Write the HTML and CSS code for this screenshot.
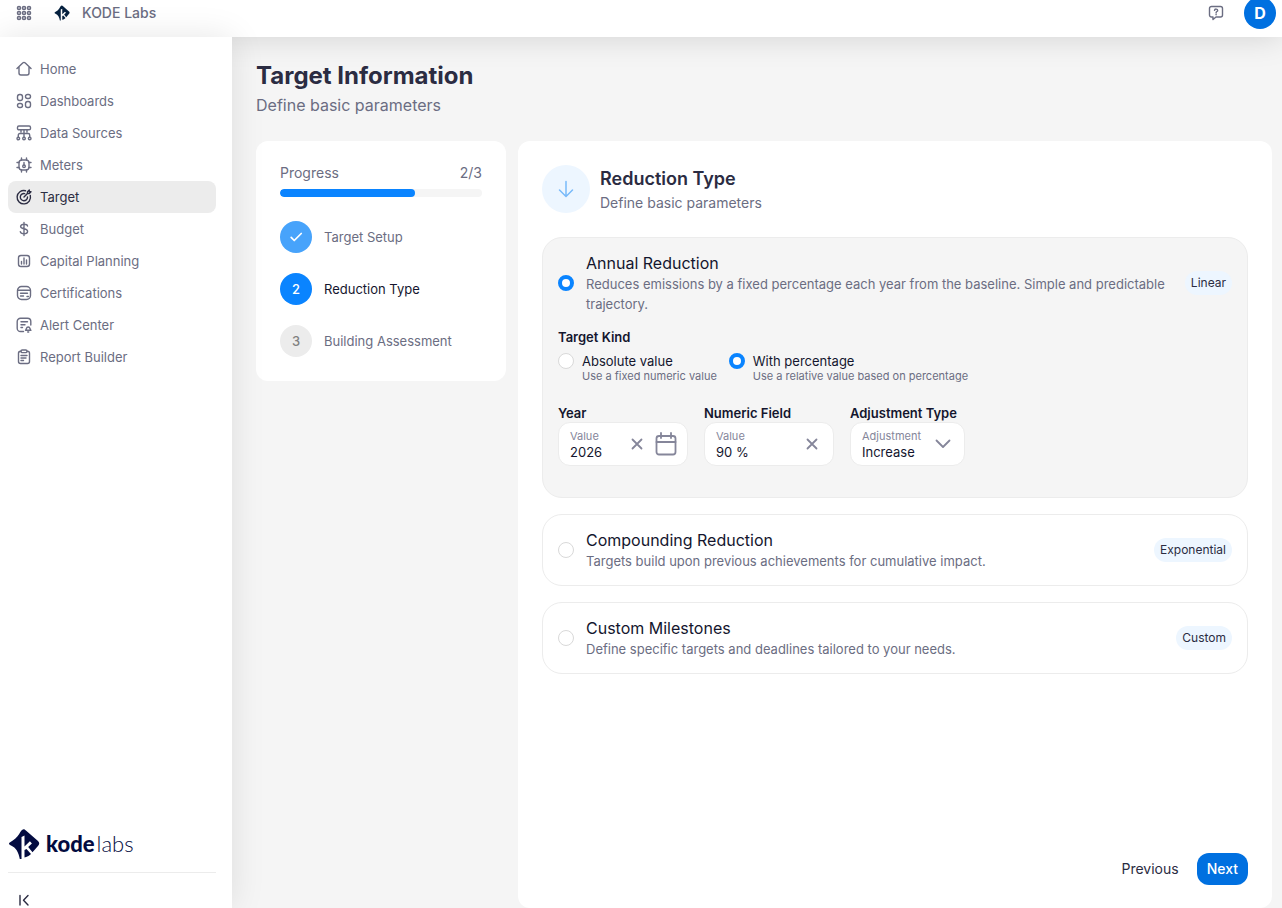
FILE: index.html
```html
<!DOCTYPE html>
<html lang="en">
<head>
<meta charset="utf-8">
<meta name="viewport" content="width=device-width, initial-scale=1">
<title>Target Information - KODE Labs</title>
<link rel="stylesheet" href="styles.css">
</head>
<body>
<div class="app">
  <header class="topbar">
    <button class="icon-btn" type="button" aria-label="Apps">
      <svg class="icon" viewBox="0 0 16 16"><g stroke-width="1.600"><circle cx="3" cy="3" r="1.500"/><circle cx="8" cy="3" r="1.500"/><circle cx="13" cy="3" r="1.500"/><circle cx="3" cy="8" r="1.500"/><circle cx="8" cy="8" r="1.500"/><circle cx="13" cy="8" r="1.500"/><circle cx="3" cy="13" r="1.500"/><circle cx="8" cy="13" r="1.500"/><circle cx="13" cy="13" r="1.500"/></g></svg>
    </button>
    <a class="org" href="#">
      <svg class="org-mark" viewBox="0 0 32 32"><use href="#mark"/></svg>
      <span>KODE Labs</span>
    </a>
    <button class="icon-btn help" type="button" aria-label="Help">
      <svg class="icon" viewBox="0 0 16 16"><path d="M3.500 1.500h9a2 2 0 0 1 2 2v6.500a2 2 0 0 1-2 2H8L5 14.500V12H3.500a2 2 0 0 1-2-2V3.500a2 2 0 0 1 2-2Z"/><path d="M6.500 5.300c.2-1.700 3.200-1.600 3.200.1 0 1.100-1.600 1.200-1.600 2.300M8.100 9.300v.4"/></svg>
    </button>
    <button class="avatar" type="button" aria-label="Account">D</button>
  </header>

  <div class="body">
    <aside class="sidebar">
      <nav class="nav">
        <a class="nav-item" href="#"><svg class="icon" viewBox="0 0 16 16"><path d="M1 7.500 6.700 2a1.900 1.900 0 0 1 2.600 0L15 7.500M3 6v6a2 2 0 0 0 2 2h6a2 2 0 0 0 2-2V6"/></svg>Home</a>
        <a class="nav-item" href="#"><svg class="icon" viewBox="0 0 16 16"><rect x="1.500" y="1.500" width="5" height="6" rx="2.200"/><rect x="9.500" y="1.500" width="5" height="4" rx="2"/><rect x="1.500" y="10.500" width="5" height="4" rx="2"/><rect x="9.500" y="8.500" width="5" height="6" rx="2.200"/></svg>Dashboards</a>
        <a class="nav-item" href="#"><svg class="icon" viewBox="0 0 16 16"><rect x="1.500" y="1" width="13" height="3.800" rx="1.400"/><path d="M8 5v7M2.300 12V10a1.500 1.500 0 0 1 1.500-1.500h8.400a1.500 1.500 0 0 1 1.500 1.500v2M5 5v2M11 5v2"/><circle cx="2.300" cy="13.500" r="1.300"/><circle cx="8" cy="13.500" r="1.300"/><circle cx="13.700" cy="13.500" r="1.300"/></svg>Data Sources</a>
        <a class="nav-item" href="#"><svg class="icon" viewBox="0 0 16 16"><rect x="3" y="3" width="10" height="10" rx="3"/><path d="M5.500 1v2M10.500 1v2M5.500 13v2M10.500 13v2M1 5.500h2M1 10.500h2M13 5.500h2M13 10.500h2M8 5.500v3"/><circle cx="8" cy="9.300" r="1.300"/></svg>Meters</a>
        <a class="nav-item active" href="#" aria-current="page"><svg class="icon" viewBox="0 0 16 16"><path d="M9.500 1.700A6.700 6.700 0 1 0 14.300 6.500M8.700 4.600A3.600 3.600 0 1 0 11.500 8M8 8l3.700-3.700M11.500 4.500V2.700L13.300 1v1.800H15l-1.700 1.700Z"/></svg>Target</a>
        <a class="nav-item" href="#"><svg class="icon" viewBox="0 0 16 16"><path d="M8 1.500v13M11.500 5C11.300 3.700 10 3.200 8 3.200S4.600 4 4.600 5.500C4.600 8.500 11.600 7 11.600 10.300c0 1.700-1.500 2.500-3.600 2.500s-3.400-.7-3.700-2.100"/></svg>Budget</a>
        <a class="nav-item" href="#"><svg class="icon" viewBox="0 0 16 16"><rect x="2.500" y="2.500" width="11" height="11" rx="2.500"/><path d="M5.500 8.500v2.500M8 5v6M10.500 7v4"/></svg>Capital Planning</a>
        <a class="nav-item" href="#"><svg class="icon" viewBox="0 0 16 16"><rect x="1.500" y="1.500" width="13" height="13" rx="4"/><path d="M2 5.300h12M4.500 8.200h7M4.500 11h3M11 11.500h1.500"/></svg>Certifications</a>
        <a class="nav-item" href="#"><svg class="icon" viewBox="0 0 16 16"><path d="M7.500 14.500H4.500a3.300 3.300 0 0 1-3.300-3.300V4.500a3.300 3.300 0 0 1 3.300-3.300h7a3.300 3.300 0 0 1 3.300 3.300V8M5 4.800h6.500M5 7.700h4M5 10.500h1.500"/><path d="M9.500 13.300c1-.8.500-3.300 2.700-3.300s1.700 2.500 2.700 3.300ZM11.700 15h1"/></svg>Alert Center</a>
        <a class="nav-item" href="#"><svg class="icon" viewBox="0 0 16 16"><path d="M5 2.300h-.5a2 2 0 0 0-2 2v8.200a2 2 0 0 0 2 2h7a2 2 0 0 0 2-2V4.300a2 2 0 0 0-2-2H11"/><rect x="5" y="1" width="6" height="2.600" rx="1.200"/><path d="M5 6.500h6M5 9h5M5 11.500h2.500"/></svg>Report Builder</a>
      </nav>
      <div class="side-foot">
        <a class="brand" href="#">
          <svg class="brand-mark" viewBox="0 0 32 32">
            <defs><g id="mark"><path fill="currentColor" d="M1 15.500c0-.7.500-1 1.500-1.600 3-1.500 6.500-4.500 8.700-8 1.400-2.500 2.600-4.700 4.400-4.700 1 0 1.700.7 2.600 1.500L30 13c1.600 1.600 1.600 3 .2 4.700l-5.700 6.600L20.200 19l3.700-3.600-2-2.100-5.400 5.300V7.500L13.500 9v22L11.800 31C10.700 24.500 8 19.500 3 17.500 1.500 17 1 16.300 1 15.500ZM16.500 22l2-1 4.500 5c-1.500 1.500-3 2.700-6.500 3.500Z"/></g></defs>
            <use href="#mark"/>
          </svg>
          <span class="brand-name"><b>kode</b><span>labs</span></span>
        </a>
        <button class="icon-btn collapse" type="button" aria-label="Collapse sidebar">
          <svg class="icon" viewBox="0 0 16 16"><path d="M4 3.500v9.500M12 3.500 7.500 8.200l4.500 4.800"/></svg>
        </button>
      </div>
    </aside>

    <main class="main">
      <h1 class="page-title">Target Information</h1>
      <p class="page-sub">Define basic parameters</p>
      <div class="columns">
        <section class="card progress-card">
          <div class="progress-head"><span id="progress-label">Progress</span><span>2/3</span></div>
          <div class="progress-bar" role="progressbar" aria-labelledby="progress-label" aria-valuemin="0" aria-valuemax="3" aria-valuenow="2"><div class="progress-fill" style="width:66.67%"></div></div>
          <ol class="steps">
            <li class="step done"><span class="step-dot"><svg class="check" viewBox="0 0 16 16"><path d="m2.500 8.500 3.500 3.500L14 4"/></svg></span>Target Setup</li>
            <li class="step current" aria-current="step"><span class="step-dot">2</span>Reduction Type</li>
            <li class="step"><span class="step-dot">3</span>Building Assessment</li>
          </ol>
        </section>

        <form class="card form-card">
          <div class="form-head">
            <span class="form-icon"><svg viewBox="0 0 18 18"><path d="M9 1.500v14.500M2.500 10 9 16.500 15.500 10"/></svg></span>
            <div>
              <h2 class="form-title">Reduction Type</h2>
              <p class="form-sub">Define basic parameters</p>
            </div>
          </div>

          <div class="options">
            <div class="option selected">
              <label class="option-row">
                <input class="radio" type="radio" name="reduction" checked>
                <span class="option-text"><span class="option-title">Annual Reduction</span><span class="option-desc">Reduces emissions by a fixed percentage each year from the baseline. Simple and predictable trajectory.</span></span>
                <span class="badge">Linear</span>
              </label>
              <fieldset class="kind">
                <legend class="label">Target Kind</legend>
                <div class="kind-row">
                  <label class="kind-item"><input class="radio" type="radio" name="kind"><span><span class="kind-title">Absolute value</span><span class="kind-desc">Use a fixed numeric value</span></span></label>
                  <label class="kind-item"><input class="radio" type="radio" name="kind" checked><span><span class="kind-title">With percentage</span><span class="kind-desc">Use a relative value based on percentage</span></span></label>
                </div>
              </fieldset>
              <div class="fields">
                <div class="field">
                  <label class="label" for="year">Year</label>
                  <div class="control control-date">
                    <div class="control-text"><span class="hint">Value</span><input class="value" id="year" type="text" value="2026"></div>
                    <button class="clear" type="button" aria-label="Clear year"><svg viewBox="0 0 12 12"><path d="m1.500 1.500 9 9M10.500 1.500l-9 9"/></svg></button>
                    <button class="calendar" type="button" aria-label="Open calendar"><svg viewBox="0 0 22 24"><rect x="1.500" y="4" width="19" height="18.500" rx="2.500"/><path d="M1.500 10h19M6 1v5M16 1v5"/></svg></button>
                  </div>
                </div>
                <div class="field">
                  <label class="label" for="numeric">Numeric Field</label>
                  <div class="control">
                    <div class="control-text"><span class="hint">Value</span><input class="value" id="numeric" type="text" value="90 %"></div>
                    <button class="clear clear-last" type="button" aria-label="Clear number"><svg viewBox="0 0 12 12"><path d="m1.500 1.500 9 9M10.500 1.500l-9 9"/></svg></button>
                  </div>
                </div>
                <div class="field field-select">
                  <label class="label" for="adjustment">Adjustment Type</label>
                  <div class="control">
                    <div class="control-text"><span class="hint">Adjustment</span><select class="value" id="adjustment"><option>Increase</option><option>Decrease</option></select></div>
                    <svg class="chevron" viewBox="0 0 16 10"><path d="m1.500 1.500 6.500 6.500 6.500-6.500"/></svg>
                  </div>
                </div>
              </div>
            </div>

            <div class="option">
              <label class="option-row">
                <input class="radio" type="radio" name="reduction">
                <span class="option-text"><span class="option-title">Compounding Reduction</span><span class="option-desc">Targets build upon previous achievements for cumulative impact.</span></span>
                <span class="badge">Exponential</span>
              </label>
            </div>
            <div class="option">
              <label class="option-row">
                <input class="radio" type="radio" name="reduction">
                <span class="option-text"><span class="option-title">Custom Milestones</span><span class="option-desc">Define specific targets and deadlines tailored to your needs.</span></span>
                <span class="badge">Custom</span>
              </label>
            </div>
          </div>

          <div class="actions">
            <button class="btn" type="button">Previous</button>
            <button class="btn btn-primary" type="button">Next</button>
          </div>
        </form>
      </div>
    </main>
  </div>
</div>
</body>
</html>
```
FILE: styles.css
```css
* { box-sizing: border-box; margin: 0; padding: 0; }

body {
  font-family: Inter, "Liberation Sans", sans-serif;
  font-size: 13px;
  line-height: 20px;
  color: #6b6d82;
  background: #f5f5f5;
}

a { color: inherit; text-decoration: none; }
button, input, select { font: inherit; color: inherit; border: 0; background: none; }
button { cursor: pointer; }
svg { display: block; flex: none; fill: none; stroke: currentColor; stroke-linecap: round; stroke-linejoin: round; }

.app { height: 100vh; display: flex; flex-direction: column; overflow: hidden; }

/* Top bar */
.topbar {
  position: relative;
  z-index: 1;
  flex: none;
  height: 48px;
  margin-top: -11px;
  padding: 0 6px 0 16px;
  display: flex;
  align-items: center;
  background: #fff;
  box-shadow: 0 0 32px rgba(0, 0, 0, 0.15);
}
.icon { width: 16px; height: 16px; stroke-width: 1.4; }
.icon-btn { display: flex; }
.org { display: flex; align-items: center; gap: 12px; margin-left: 22px; font-size: 14px; font-weight: 500; }
.org-mark { width: 16px; height: 16px; color: #06213f; stroke: none; }
.help { margin-left: auto; }
.avatar {
  width: 32px;
  height: 32px;
  margin-left: 20px;
  border-radius: 50%;
  background: #0070e0;
  color: #fff;
  font-size: 16px;
  font-weight: 700;
}

.body { flex: 1; min-height: 0; display: flex; }

/* Sidebar */
.sidebar {
  position: relative;
  z-index: 2;
  flex: none;
  width: 232px;
  padding: 16px 16px 0 8px;
  display: flex;
  flex-direction: column;
  justify-content: space-between;
  background: #fff;
  box-shadow: 0 0 32px rgba(0, 0, 0, 0.1);
}
.nav-item { display: flex; align-items: center; gap: 8px; height: 32px; padding: 0 8px; border-radius: 8px; }
.nav-item.active { background: #ececec; color: #2b2c42; }
.brand { display: flex; align-items: center; gap: 6px; padding-bottom: 12px; border-bottom: 1px solid #ececec; color: #030b40; }
.brand-mark { width: 32px; height: 32px; stroke: none; }
.brand-name { font-family: Lato, sans-serif; font-size: 22px; line-height: 24px; display: flex; gap: 2px; }
.brand-name b { font-weight: 900; }
.brand-name span { font-weight: 300; }
.collapse { padding: 19px 8px 0; color: #2b2c42; }

/* Page */
.main { flex: 1; min-width: 0; padding: 24px 10px 0 24px; display: flex; flex-direction: column; }
.page-title { font-size: 24px; line-height: 30px; font-weight: 700; color: #2b2c42; }
.page-sub { margin: 2px 0 24px; font-size: 16px; line-height: 24px; }
.columns { flex: 1; display: flex; align-items: flex-start; gap: 12px; }
.card { background: #fff; border-radius: 12px; padding: 24px; }

.progress-card { flex: none; width: 250px; }
.progress-head { display: flex; justify-content: space-between; font-size: 14px; line-height: 16px; }
.progress-bar { height: 8px; margin: 8px 0 24px; border-radius: 4px; background: #f5f5f5; overflow: hidden; }
.progress-fill { height: 100%; border-radius: 4px; background: #0a84ff; }
.steps { list-style: none; display: grid; gap: 20px; }
.step { display: flex; align-items: center; gap: 12px; }
.step-dot { width: 32px; height: 32px; border-radius: 50%; display: grid; place-items: center; background: #ececec; color: #808080; font-weight: 500; }
.step.done .step-dot { background: #47a3fb; color: #fff; }
.step.current { color: #14162e; }
.step.current .step-dot { background: #0a84ff; color: #fff; }
.check { width: 14px; height: 14px; stroke-width: 2; }

.form-card { flex: 1; min-width: 0; align-self: stretch; display: flex; flex-direction: column; padding-bottom: 23px; }
.form-head { display: flex; align-items: center; gap: 10px; margin-bottom: 24px; }
.form-icon { width: 48px; height: 48px; border-radius: 50%; display: grid; place-items: center; background: #edf6ff; color: #78bafa; }
.form-icon svg { width: 18px; height: 18px; stroke-width: 1.5; }
.form-title { font-size: 18px; line-height: 28px; font-weight: 600; color: #2b2c42; }
.form-sub { font-size: 14px; line-height: 20px; }

/* Reduction options */
.options { display: grid; gap: 16px; }
.option { padding: 14px 15px; border: 1px solid #ececec; border-radius: 20px; }
.option.selected { padding-bottom: 31px; background: #f5f5f5; }
.option-row { display: flex; align-items: center; gap: 12px; }
.option-text { flex: 1; min-width: 0; }
.option-title { display: block; font-size: 16px; line-height: 22px; color: #14162e; }
.option-desc { display: block; }
.badge { flex: none; padding: 0 6px; border-radius: 12px; line-height: 24px; font-size: 12px; background: #edf6ff; color: #2b2c42; }
.radio { appearance: none; flex: none; width: 16px; height: 16px; border: 1px solid #d9d9d9; border-radius: 50%; background: #fff; }
.radio:checked { border: 4px solid #0a84ff; }

.label { display: block; line-height: 18px; font-weight: 600; color: #14162e; }
.kind { border: 0; margin: 14px 0 21px; }
.kind-row { display: flex; gap: 12px; padding-top: 7px; }
.kind-item { display: flex; gap: 8px; }
.kind-title { display: block; line-height: 16px; color: #14162e; }
.kind-desc { display: block; font-size: 11px; line-height: 14px; }

.fields { display: flex; gap: 16px; }
.field { width: 130px; }
.field-select { width: 115px; }
.control { position: relative; display: flex; align-items: center; height: 44px; padding: 0 11px; border: 1px solid #ececec; border-radius: 12px; background: #fff; color: #85869a; }
.control-date { padding-right: 10px; }
.control-text { flex: 1; min-width: 0; }
.hint { display: block; font-size: 11px; line-height: 16px; }
.value { appearance: none; display: block; width: 100%; height: 16px; line-height: 16px; color: #14162e; outline: 0; }
.clear { flex: none; }
.clear svg { width: 12px; height: 12px; stroke-width: 1.8; }
.clear-last { margin-right: 4px; }
.calendar { flex: none; margin-left: 12px; }
.calendar svg { width: 22px; height: 24px; stroke-width: 1.8; }
.chevron { position: absolute; right: 13px; top: 16px; width: 16px; height: 10px; stroke-width: 1.8; pointer-events: none; }

.actions { display: flex; justify-content: flex-end; gap: 8px; margin-top: auto; }
.btn { height: 32px; padding: 0 10px; border-radius: 12px; font-size: 14px; color: #2b2c42; }
.btn-primary { background: #0070e0; color: #fff; font-weight: 500; }
```
